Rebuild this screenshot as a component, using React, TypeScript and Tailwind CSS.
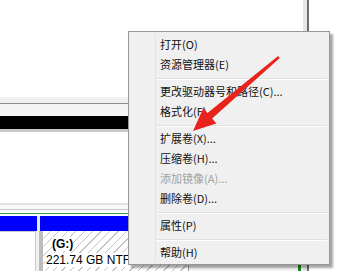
import React from 'react';

type MenuEntry = { label: string; disabled?: boolean } | 'sep';

const menu: MenuEntry[] = [
  { label: '打开(O)' },
  { label: '资源管理器(E)' },
  'sep',
  { label: '更改驱动器号和路径(C)...' },
  { label: '格式化(F)' },
  'sep',
  { label: '扩展卷(X)...' },
  { label: '压缩卷(H)...' },
  { label: '添加镜像(A)...', disabled: true },
  { label: '删除卷(D)...' },
  'sep',
  { label: '属性(P)' },
  'sep',
  { label: '帮助(H)' },
];

const hatch =
  'bg-[repeating-linear-gradient(135deg,#ffffff_0px,#ffffff_5px,#c4c4c4_5px,#c4c4c4_6px)]';

const ContextMenu: React.FC = () => (
  <div className="absolute left-[128px] top-[31px] w-[202px] border border-[#979797] bg-[#f0f0f0] py-[2px] shadow-[3px_3px_2px_rgba(0,0,0,0.35)] font-['Noto_Sans_CJK_SC',sans-serif] text-[11px]">
    {/* icon column divider */}
    <div className="absolute left-[26px] top-[2px] bottom-[2px] w-[2px] border-l border-[#e2e3e3] border-r-white" />
    {menu.map((item, i) =>
      item === 'sep' ? (
        <div key={i} className="h-[7px] pt-[4px] pl-[28px] pr-[2px]">
          <div className="h-px bg-[#e0e0e0]" />
          <div className="h-px bg-white" />
        </div>
      ) : (
        <div
          key={i}
          className={`relative h-[20px] pl-[31px] flex items-center leading-none ${
            item.disabled ? 'text-[#a0a0a0]' : 'text-[#111]'
          }`}
        >
          {item.label}
        </div>
      )
    )}
  </div>
);

const Arrow: React.FC = () => (
  <svg className="absolute left-0 top-0 pointer-events-none" width="357" height="271" viewBox="0 0 357 271">
    <polygon
      fill="#e8231d"
      points="279.8,57.9 212.1,118.5 216.3,123.4 193,131 203.3,108.2 207.5,113.1 278.2,56.1"
    />
  </svg>
);

export default function App() {
  return (
    <div className="relative w-[357px] h-[271px] overflow-hidden bg-white flex">
      {/* main pane */}
      <div className="w-[303px] flex flex-col">
        <div className="h-[97px] bg-white" />
        <div className="h-[6px] bg-[#f0f0f0]" />
        <div className="h-px bg-[#8c8c8c]" />
        <div className="h-[12px] bg-[#f4f4f4]" />
        <div className="h-[13px] bg-black" />
        <div className="h-[3px] bg-[#c8c8c8]" />
        <div className="h-[71px] bg-white" />
        <div className="h-[2px] bg-[#e2e2e2]" />
        <div className="h-[4px] bg-[#f8f8f8]" />
        <div className="h-px bg-[#c4c4c4]" />
        <div className="h-[3px] bg-white" />
        <div className="h-px bg-[#3c9c3c]" />
        <div className="h-[2px] bg-white" />
        {/* volume bars */}
        <div className="flex h-[15px]">
          <div className="w-[37px] bg-[#0000ff]" />
          <div className="w-[3px] bg-[#e8e8e8]" />
          <div className="flex-1 bg-[#0000ff]" />
        </div>
        <div className="flex flex-1">
          <div className="w-[36px] bg-white border-t border-r border-[#c8c8c8]" />
          <div className="w-[3px] bg-[#f0f0f0]" />
          <div className={`w-[149px] border-l-[4px] border-[#bcbcbc] ${hatch} pl-[3px] pt-[5px] font-['Liberation_Sans',sans-serif] text-[12px] text-black`}>
            <div className="pl-[6px] font-bold leading-[16px] text-[12px]">
              <span className="bg-white">(G:)</span>
            </div>
            <div className="leading-[16px] whitespace-nowrap">
              <span className="bg-white">221.74 GB NTFS</span>
            </div>
          </div>
          <div className="w-px bg-[#a0a0a0]" />
          <div className="flex-1 bg-[#f4f4f4] flex justify-end items-end pr-[2px]">
            <div className="w-[3px] h-[6px] bg-[#109010]" />
          </div>
        </div>
      </div>
      {/* scrollbar edge */}
      <div className="w-[4px] bg-[#e6e6e6]" />
      <div className="w-[2px] bg-[#6e6e6e]" />
      <div className="flex-1 bg-white" />

      <ContextMenu />
      <Arrow />
    </div>
  );
}
